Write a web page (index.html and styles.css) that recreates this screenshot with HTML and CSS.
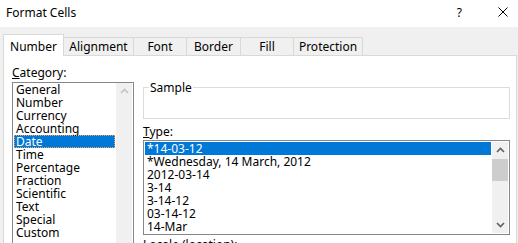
FILE: index.html
```html
<!DOCTYPE html>
<html>
<head>
<meta charset="utf-8">
<link rel="stylesheet" href="styles.css">
</head>
<body>
<div class="titlebar">
  <span class="title">Format Cells</span>
  <span class="help">?</span>
  <span class="close"><svg width="10" height="10" viewBox="0 0 10 10"><path d="M0.5 0.5 L9.5 9.5 M9.5 0.5 L0.5 9.5" stroke="#000" stroke-width="1" fill="none"/></svg></span>
</div>
<div class="tabs">
  <div class="tab active w-number">Number</div>
  <div class="tab w-align">Alignment</div>
  <div class="tab w-font">Font</div>
  <div class="tab w-border">Border</div>
  <div class="tab w-fill">Fill</div>
  <div class="tab w-prot">Protection</div>
</div>
<div class="panel">
  <div class="col-left">
    <div class="label cat-label"><u>C</u>ategory:</div>
    <div class="listbox cat">
      <div class="items">
        <div class="item">General</div>
        <div class="item">Number</div>
        <div class="item">Currency</div>
        <div class="item">Accounting</div>
        <div class="item selected focused">Date</div>
        <div class="item">Time</div>
        <div class="item">Percentage</div>
        <div class="item">Fraction</div>
        <div class="item">Scientific</div>
        <div class="item">Text</div>
        <div class="item">Special</div>
        <div class="item">Custom</div>
      </div>
      <div class="scrollbar">
        <div class="sb-btn"><svg width="9" height="6" viewBox="0 0 9 6"><polyline points="1,5 4.5,1.5 8,5" fill="none" stroke="#c4c4c4" stroke-width="1.6"/></svg></div>
      </div>
    </div>
  </div>
  <div class="col-right">
    <div class="groupbox"><span class="legend">Sample</span></div>
    <div class="label type-label"><u>T</u>ype:</div>
    <div class="listbox type">
      <div class="items">
        <div class="item selected">*14-03-12</div>
        <div class="item">*Wednesday, 14 March, 2012</div>
        <div class="item">2012-03-14</div>
        <div class="item">3-14</div>
        <div class="item">3-14-12</div>
        <div class="item">03-14-12</div>
        <div class="item">14-Mar</div>
      </div>
      <div class="scrollbar dark">
        <div class="sb-btn"><svg width="9" height="6" viewBox="0 0 9 6"><polyline points="1,5 4.5,1.5 8,5" fill="none" stroke="#606060" stroke-width="1.6"/></svg></div>
        <div class="thumb"></div>
        <div class="sb-track"></div>
        <div class="sb-btn"><svg width="9" height="6" viewBox="0 0 9 6"><polyline points="1,1 4.5,4.5 8,1" fill="none" stroke="#606060" stroke-width="1.6"/></svg></div>
      </div>
    </div>
    <div class="label locale">Locale (location):</div>
  </div>
</div>
</body>
</html>
```

FILE: styles.css
```css
html, body {
  margin: 0;
  padding: 0;
}
body {
  width: 518px;
  height: 243px;
  overflow: hidden;
  background: #f0f0f0;
  font-family: "Noto Sans", "Open Sans", sans-serif;
  font-size: 12px;
  line-height: 13px;
  color: #000;
}
.titlebar {
  height: 27px;
  box-sizing: border-box;
  background: #fff;
  display: flex;
  align-items: center;
  padding-left: 6px;
  padding-right: 10px;
}
.title {
  line-height: 15px;
  margin-top: -2px;
}
.help {
  margin-left: auto;
  margin-top: -2px;
  line-height: 15px;
}
.close {
  margin-left: 36px;
  display: flex;
  margin-top: -3px;
}
.tabs {
  display: flex;
  align-items: flex-end;
  height: 21px;
  margin-top: 7px;
  padding-left: 3px;
  position: relative;
  z-index: 1;
}
.tab {
  box-sizing: border-box;
  height: 18px;
  border: 1px solid #d9d9d9;
  border-bottom: none;
  background: #f0f0f0;
  text-align: center;
  line-height: 15px;
  padding-top: 1px;
  margin-left: -1px;
}
.tab.active {
  height: 22px;
  margin-bottom: -1px;
  margin-left: 0;
  background: #fff;
  padding-top: 4px;
}
.w-number { width: 61px; }
.w-align { width: 71px; }
.w-font { width: 54px; }
.w-border { width: 55px; }
.w-fill { width: 54px; }
.w-prot { width: 70px; }
.panel {
  margin: 0 1px 0 3px;
  height: 200px;
  box-sizing: border-box;
  border: 1px solid #d9d9d9;
  background: #fff;
  display: grid;
  grid-template-columns: 122px 367px;
  column-gap: 9px;
  padding: 9px 8px 0 8px;
  align-items: start;
}
.label {
  line-height: 15px;
}
.cat-label {
  margin-bottom: 2px;
}
.listbox {
  box-sizing: border-box;
  border: 1px solid #828790;
  display: grid;
  grid-template-columns: 1fr 16px;
  column-gap: 1px;
  background: #fff;
}
.listbox.cat {
  height: 170px;
  padding: 0 1px 1px 1px;
}
.listbox.type {
  height: 95px;
  padding: 1px;
  overflow: hidden;
}
.item {
  height: 13px;
  line-height: 13px;
  padding-left: 2px;
  white-space: nowrap;
}
.item.selected {
  background: #0078d7;
  color: #fff;
}
.item.focused {
  outline: 1px dotted #f5a25a;
  outline-offset: -1px;
}
.scrollbar {
  background: #f0f0f0;
  display: flex;
  flex-direction: column;
}
.sb-btn {
  height: 16px;
  display: flex;
  align-items: center;
  justify-content: center;
  flex-shrink: 0;
}
.thumb {
  height: 22px;
  margin-top: 1px;
  background: #cdcdcd;
  flex-shrink: 0;
}
.sb-track {
  flex: 1;
}
.groupbox {
  position: relative;
  margin-top: 22px;
  height: 32px;
  box-sizing: border-box;
  border: 1px solid #dcdcdc;
}
.legend {
  position: absolute;
  top: -8px;
  left: 5px;
  background: #fff;
  padding: 0 1px;
  line-height: 15px;
}
.type-label {
  margin-top: 5px;
  margin-bottom: 1px;
}
.locale {
  margin-top: 2px;
}
```
